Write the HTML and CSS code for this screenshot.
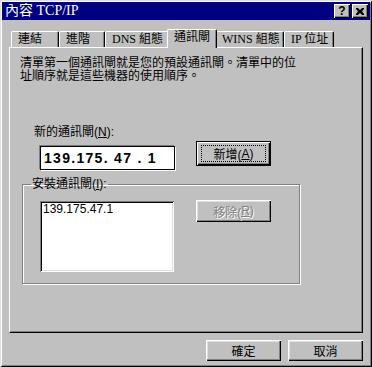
FILE: index.html
```html
<!DOCTYPE html>
<html>
	<head>
		<meta charset="UTF-8">
		<title>內容 TCP/IP</title>
		<link rel="stylesheet" href="styles.css">
	</head>
	<body>
		<div class="window">
			<!--標題列-->
			<div class="titlebar">
				<span class="title">內容 TCP/IP</span>
				<div class="title-btns">
					<span class="tbtn help">?</span>
					<span class="tbtn close">
						<svg width="8" height="7" viewBox="0 0 8 7">
							<path d="M0 0h2l2 2 2-2h2v1l-2 2.5 2 2.5v1h-2l-2-2-2 2h-2v-1l2-2.5-2-2.5z" fill="#000"/>
						</svg>
					</span>
				</div>
			</div>
			<!--頁籤-->
			<ul class="tabs">
				<li class="tab t1">連結</li>
				<li class="tab t2">進階</li>
				<li class="tab t3">DNS 組態</li>
				<li class="tab t4 active">通訊閘</li>
				<li class="tab t5">WINS 組態</li>
				<li class="tab t6">IP 位址</li>
			</ul>
			<div class="panel">
				<p class="desc">清單第一個通訊閘就是您的預設通訊閘。清單中的位<br>址順序就是這些機器的使用順序。</p>
				<p class="new-label">新的通訊閘(<u>N</u>):</p>
				<div class="new-row">
					<div class="ipbox">139.175. 47 . 1</div>
					<button class="btn default"><span class="focus">新增(<u>A</u>)</span></button>
				</div>
				<fieldset class="group">
					<legend>安裝通訊閘(<u>I</u>):</legend>
					<div class="group-row">
						<ul class="listbox">
							<li>139.175.47.1</li>
						</ul>
						<button class="btn disabled">移除(<u>R</u>)</button>
					</div>
				</fieldset>
			</div>
			<!--確定 取消-->
			<div class="footer">
				<button class="btn">確定</button>
				<button class="btn">取消</button>
			</div>
		</div>
	</body>
</html>
```

FILE: styles.css
```css
*{
	margin: 0px;
	padding: 0px;
	box-sizing: border-box;
}
ul,li{
	list-style: none;
}
body{
	background: #c0c0c0;
	font-family: "Liberation Sans", "Noto Sans CJK TC", sans-serif;
	font-size: 12px;
	color: #000;
}
.window{
	width: 372px;
	height: 367px;
	padding: 2px;
	background: #c0c0c0;
	box-shadow: inset 1px 1px 0 #dfdfdf, inset -1px -1px 0 #000, inset 2px 2px 0 #fff, inset -2px -2px 0 #808080;
	display: flex;
	flex-direction: column;
}
.titlebar{
	height: 18px;
	background: #000080;
	color: #fff;
	display: flex;
	align-items: center;
	justify-content: space-between;
	padding: 0px 2px 0px 3px;
}
.title{
	font-family: "Liberation Serif", "Noto Sans CJK TC", serif;
	font-size: 14px;
	line-height: 16px;
}
.title-btns{
	display: flex;
	gap: 2px;
}
.tbtn{
	width: 16px;
	height: 14px;
	background: #c0c0c0;
	color: #000;
	box-shadow: inset 1px 1px 0 #fff, inset -1px -1px 0 #000, inset -2px -2px 0 #808080;
	display: flex;
	align-items: center;
	justify-content: center;
	font-weight: bold;
	font-size: 12px;
	line-height: 12px;
}
.tabs{
	display: flex;
	align-items: flex-end;
	height: 18px;
	margin: 9px 7px 0px 7px;
	padding-left: 2px;
	position: relative;
	z-index: 1;
}
.tab{
	height: 16px;
	padding-left: 6px;
	font-family: "Liberation Serif", "Noto Sans CJK TC", serif;
	font-size: 12px;
	line-height: 15px;
	white-space: nowrap;
	border-top: 1px solid #fff;
	border-left: 1px solid #fff;
	border-right: 1px solid #000;
	border-radius: 2px 2px 0px 0px;
	box-shadow: inset -1px 0 0 #808080;
}
.t1{ width: 48px; }
.t2{ width: 46px; }
.t3{ width: 64px; }
.t4{ width: 46px; }
.t5{ width: 69px; }
.t6{ width: 50px; }
.tab.active{
	width: 50px;
	height: 19px;
	margin: 0px -2px -1px -2px;
	background: #c0c0c0;
	line-height: 14px;
	position: relative;
}
.panel{
	height: 286px;
	margin: 0px 7px;
	border-top: 1px solid #fff;
	border-left: 1px solid #fff;
	border-right: 1px solid #000;
	border-bottom: 1px solid #000;
	box-shadow: inset -1px -1px 0 #808080;
	display: flex;
	flex-direction: column;
	align-items: flex-start;
}
.desc{
	margin: 9px 0px 0px 10px;
	line-height: 13px;
}
.new-label{
	margin: 43px 0px 0px 24px;
	line-height: 13px;
}
.new-row{
	display: flex;
	align-items: flex-start;
	margin: 2px 0px 0px 30px;
}
.ipbox{
	width: 135px;
	height: 24px;
	margin-top: 5px;
	background: #fff;
	border: 1px solid #000;
	box-shadow: -1px -1px 0 #808080, 1px 1px 0 #fff;
	font-weight: bold;
	font-size: 14px;
	line-height: 22px;
	letter-spacing: 1.3px;
	padding-left: 3px;
	white-space: pre;
}
.btn{
	width: 75px;
	height: 22px;
	background: #c0c0c0;
	border: 0px;
	font-family: "Liberation Sans", "Noto Sans CJK TC", sans-serif;
	font-size: 12px;
	color: #000;
	box-shadow: inset 1px 1px 0 #fff, inset -1px -1px 0 #000, inset -2px -2px 0 #808080, inset 2px 2px 0 #dfdfdf;
	display: flex;
	align-items: center;
	justify-content: center;
}
.btn.default{
	height: 25px;
	margin-left: 21px;
	border: 1px solid #000;
	box-shadow: inset 1px 1px 0 #fff, inset -1px -1px 0 #000, inset -2px -2px 0 #808080;
}
.focus{
	width: 65px;
	height: 17px;
	border: 1px dotted #000;
	display: flex;
	align-items: center;
	justify-content: center;
}
.btn.disabled{
	color: #808080;
	text-shadow: 1px 1px 0 #fff;
	margin-left: 22px;
}
.group{
	width: 278px;
	height: 106px;
	margin: 8px 0px 0px 12px;
	padding: 9px 0px 0px 8px;
	border: 1px solid #808080;
	box-shadow: 1px 1px 0 #fff, inset 1px 1px 0 #fff;
}
.group legend{
	padding: 0px 1px;
	line-height: 13px;
}
.group-row{
	display: flex;
	align-items: flex-start;
	padding-left: 9px;
}
.listbox{
	width: 134px;
	height: 71px;
	margin-top: 1px;
	background: #fff;
	box-shadow: inset 1px 1px 0 #808080, inset -1px -1px 0 #fff, inset 2px 2px 0 #000, inset -2px -2px 0 #dfdfdf;
	padding: 2px 0px 0px 3px;
}
.listbox li{
	line-height: 13px;
}
.footer{
	display: flex;
	justify-content: flex-end;
	gap: 7px;
	margin: 7px 7px 0px 0px;
}
.footer .btn{
	height: 21px;
}
```
